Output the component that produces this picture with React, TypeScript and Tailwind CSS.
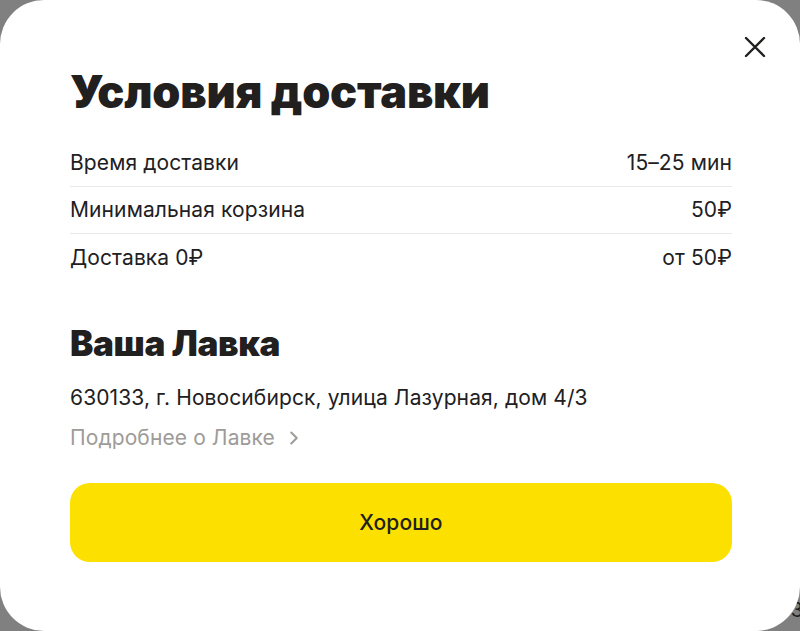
import { ChevronRight } from "lucide-react";

const rows = [
  { label: "Время доставки", value: "15–25 мин" },
  { label: "Минимальная корзина", value: "50₽" },
  { label: "Доставка 0₽", value: "от 50₽" },
];

export default function App() {
  return (
    <div className="relative h-[631px] w-[800px] overflow-hidden bg-[#808080] font-['Inter',sans-serif] text-[#21201f]">
      <span className="absolute bottom-[6px] right-[-3px] text-[20px] text-[#21201f]">3</span>
      <div className="relative flex h-full w-full flex-col rounded-[44px] bg-white pl-[70px] pr-[68px] pt-[69px]">
        <button className="absolute right-[33px] top-[35px] text-[#21201f]">
          <svg width="24" height="24" viewBox="0 0 24 24" fill="none" stroke="currentColor" strokeWidth="2.4" strokeLinecap="round">
            <path d="M3 3l18 18M21 3L3 21" />
          </svg>
        </button>

        <h1 className="text-[45px] font-black leading-none tracking-[-0.005em]">
          Условия доставки
        </h1>

        <div className="mt-[26px] flex flex-col">
          {rows.map((row, i) => (
            <div
              key={row.label}
              className={`flex h-[47px] items-center justify-between text-[21px] tracking-[0.005em] ${
                i < rows.length - 1 ? "border-b border-[#ebe9e7]" : ""
              }`}
            >
              <span>{row.label}</span>
              <span>{row.value}</span>
            </div>
          ))}
        </div>

        <h2 className="mt-[45px] text-[35px] font-black leading-none tracking-[-0.01em]">
          Ваша Лавка
        </h2>
        <p className="mt-[25px] text-[21px] leading-[24px] tracking-[0.005em]">
          630133, г. Новосибирск, улица Лазурная, дом 4/3
        </p>
        <a className="mt-[16px] flex items-center gap-[8px] text-[21px] leading-[24px] tracking-[0.005em] text-[#9e9b98]">
          Подробнее о Лавке
          <ChevronRight size={22} strokeWidth={2.2} className="text-[#9e9b98]" />
        </a>

        <button className="mt-[33px] flex h-[79px] w-full items-center justify-center rounded-[20px] bg-[#fce000] text-[21px] font-medium tracking-[0.005em]">
          Хорошо
        </button>
      </div>
    </div>
  );
}
